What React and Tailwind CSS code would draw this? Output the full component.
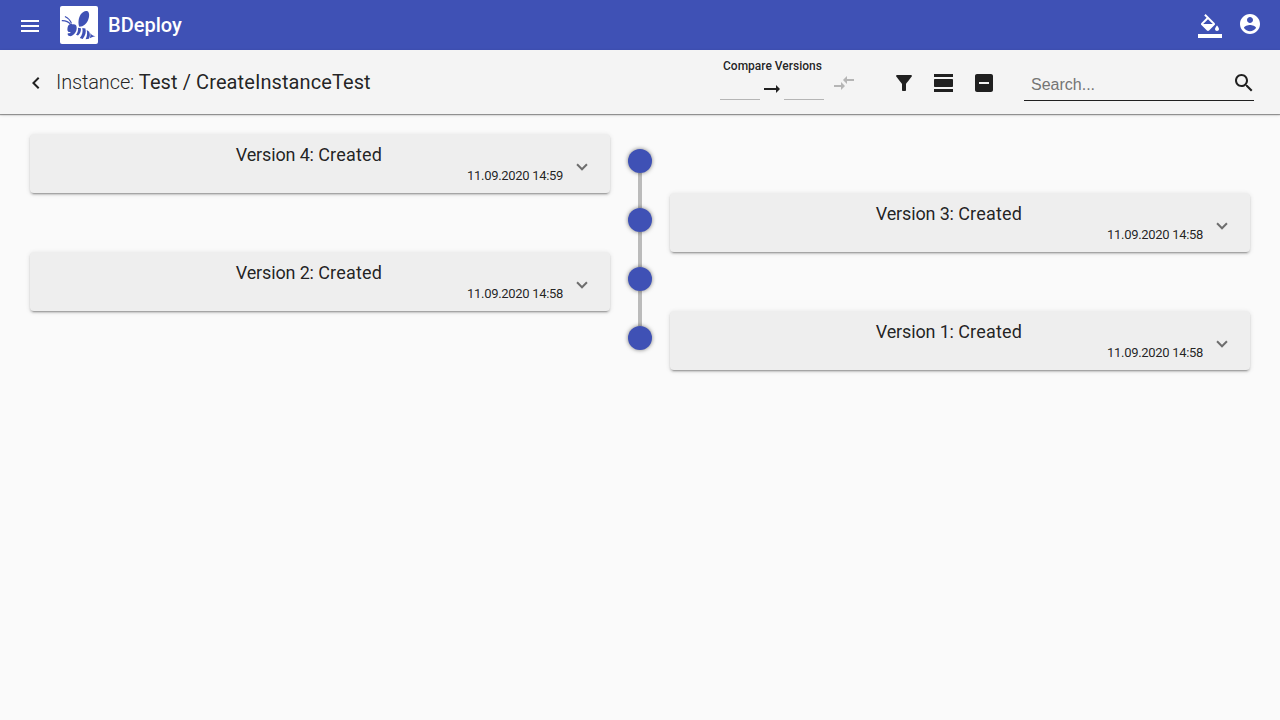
const ICONS = {
  menu: 'M3 18h18v-2H3v2zm0-5h18v-2H3v2zm0-7v2h18V6H3z',
  fill: 'M16.56 8.94L7.62 0 6.21 1.41l2.38 2.38-5.15 5.15c-.59.59-.59 1.54 0 2.12l5.5 5.5c.29.29.68.44 1.06.44s.77-.15 1.06-.44l5.5-5.5c.59-.58.59-1.53 0-2.12zM5.21 10L10 5.21 14.79 10H5.21zM19 11.5s-2 2.17-2 3.5c0 1.1.9 2 2 2s2-.9 2-2c0-1.33-2-3.5-2-3.5zM0 20h24v4H0z',
  account: 'M12 2C6.48 2 2 6.48 2 12s4.48 10 10 10 10-4.48 10-10S17.52 2 12 2zm0 3c1.66 0 3 1.34 3 3s-1.34 3-3 3-3-1.34-3-3 1.34-3 3-3zm0 14.2c-2.5 0-4.71-1.28-6-3.22.03-1.99 4-3.08 6-3.08 1.99 0 5.97 1.09 6 3.08-1.29 1.94-3.5 3.22-6 3.22z',
  back: 'M15.41 7.41L14 6l-6 6 6 6 1.41-1.41L10.83 12z',
  arrow: 'M16.01 11H4v2h12.01v3L20 12l-3.99-4v3z',
  compare: 'M9.01 14H2v2h7.01v3L13 15l-3.99-4v3zm5.98-1v-3H22V8h-7.01V5L11 9l3.99 4z',
  filter: 'M4.25 5.61C6.27 8.2 10 13 10 13v6c0 .55.45 1 1 1h2c.55 0 1-.45 1-1v-6s3.72-4.8 5.74-7.39A.998.998 0 0 0 18.95 4H5.04c-.83 0-1.3.95-.79 1.61z',
  day: 'M2 21h19v-3H2v3zM20 8H3c-.55 0-1 .45-1 1v6c0 .55.45 1 1 1h17c.55 0 1-.45 1-1V9c0-.55-.45-1-1-1zM2 3v3h19V3H2z',
  minus: 'M19 3H5c-1.1 0-2 .9-2 2v14c0 1.1.9 2 2 2h14c1.1 0 2-.9 2-2V5c0-1.1-.9-2-2-2zm-2 10H7v-2h10v2z',
  search: 'M15.5 14h-.79l-.28-.27C15.41 12.59 16 11.11 16 9.5 16 5.91 13.09 3 9.5 3S3 5.91 3 9.5 5.91 16 9.5 16c1.61 0 3.09-.59 4.23-1.57l.27.28v.79l5 4.99L20.49 19l-4.99-5zm-6 0C7.01 14 5 11.99 5 9.5S7.01 5 9.5 5 14 7.01 14 9.5 11.99 14 9.5 14z',
};

function Icon({ name, className = '' }) {
  return (
    <svg viewBox="0 0 24 24" fill="currentColor" className={`size-6 shrink-0 ${className}`}>
      <path d={ICONS[name]} />
    </svg>
  );
}

function BeeLogo() {
  return (
    <svg viewBox="0 0 38 38" className="ml-[18px] size-[38px] shrink-0 text-[#3f51b5]">
      <rect width="38" height="38" rx="2" fill="#fff" />
      <g fill="currentColor">
        <path d="M19.300 20.800C17.800 17.500 18.300 12 20.800 8.300 22.800 5.400 25.700 4.200 27.600 5.300c2 1.300 1.900 5.300.4 9-1.500 3.500-4.500 6.300-8.700 6.500z" />
        <path d="M8.300 19.600c.8-1.600 3-2.200 4.600-1.200 1.600-.5 3 .3 3.500 1.700.9 2.600-.1 6-2.200 8-1.300 1.500-3 2.300-4.600 2-1.600-.3-2.300-1.600-1.800-2.900 1.400.3 2.600-.2 2.900-1.300-2.200.5-3.600-.8-3.300-3 .1-1.200.4-2.300.9-3.300z" />
        <path d="M18 21.700l2.900.6c.3 2.900-.6 5.500-2.900 7.300l-2-.9c1.700-2 2.300-4.300 2-7z" />
        <path d="M22.300 21.900l3.100.7c1 3.700.1 7.100-2.700 10.300l-2.900-.9c2.500-3 3.300-6.400 2.500-10.100z" />
        <path d="M26.700 24l2.500 1.700c1 2.400.9 4.800-.3 7.100l-3.300.4c1.500-3 1.900-6.100 1.100-9.200z" />
        <path d="M30.200 27c.9 1.700 2.300 2.500 5.300 3.300-2 .2-3.600 1-5.700 2 .6-1.800.8-3.500.4-5.300z" />
      </g>
      <path d="M10.500 18.500C8.500 15.500 5.500 14.600 1.800 14.700M11.500 17.500c-1.200-3.200-3.300-5.600-6.600-7" fill="none" stroke="currentColor" strokeWidth="1.200" />
    </svg>
  );
}

const VERSIONS = [
  { id: 4, time: '11.09.2020 14:59' },
  { id: 3, time: '11.09.2020 14:58' },
  { id: 2, time: '11.09.2020 14:58' },
  { id: 1, time: '11.09.2020 14:58' },
];

function VersionCard({ version }) {
  return (
    <div className="flex h-[59px] w-[580px] items-center rounded bg-[#eeeeee] pl-6 shadow-[0_3px_1px_-2px_rgba(0,0,0,0.2),0_2px_2px_0_rgba(0,0,0,0.14),0_1px_5px_0_rgba(0,0,0,0.12)]">
      <div className="flex w-[509px] shrink-0 flex-col pt-[3px]">
        <div className="h-[22px] pl-[1px] text-center text-[18px] leading-[22px]">
          <span className="tracking-[-0.15px]">Version {version.id}: </span>
          <span className="tracking-[0.22px]">Created</span>
        </div>
        <div className="h-5 text-right text-[13px] leading-5 tracking-[-0.31px]">{version.time}</div>
      </div>
      <div className="mt-[2px] ml-[15px] size-2 shrink-0 rotate-45 border-r-2 border-b-2 border-black/54" />
    </div>
  );
}

function TimelineRow({ version, left, last }) {
  return (
    <div className="grid h-[59px] grid-cols-[580px_60px_580px]">
      <div>{left && <VersionCard version={version} />}</div>
      <div className="flex flex-col items-center pt-[15px]">
        <div className="z-10 size-6 shrink-0 rounded-full bg-[#3f51b5] shadow-[0_0_4px_rgba(0,0,0,0.5)]" />
        {!last && <div className="h-[35px] w-1 shrink-0 bg-[#bbbbbb]" />}
      </div>
      <div>{!left && <VersionCard version={version} />}</div>
    </div>
  );
}

export default function App() {
  return (
    <div className="h-screen overflow-hidden bg-[#fafafa] font-['Roboto',sans-serif] text-black/87">
      <header className="flex h-[50px] items-center bg-[#3f51b5] pr-[18px] pl-[18px] text-white">
        <Icon name="menu" className="mt-[2px]" />
        <BeeLogo />
        <h1 className="ml-[10px] flex-1 text-[20px] leading-8 font-medium">BDeploy</h1>
        <Icon name="fill" className="mt-[2px]" />
        <Icon name="account" className="mb-[2px] ml-4" />
      </header>

      <div className="flex h-16 items-center bg-[#f4f4f4] pl-6 pr-[26px] shadow-[0_1px_1px_rgba(0,0,0,0.36),0_1px_3px_rgba(0,0,0,0.16)]">
        <Icon name="back" className="mt-[2px]" />
        <div className="ml-2 w-[664px] text-[20px] leading-8 whitespace-nowrap">
          <span className="font-light tracking-[-0.15px]">Instance: </span>
          <span className="tracking-[0.09px]">Test / CreateInstanceTest</span>
        </div>
        <div className="flex w-[104px] shrink-0 flex-col pb-[6px]">
          <div className="h-[14px] pl-[3px] text-[12px] leading-[14px] font-medium whitespace-nowrap">Compare Versions</div>
          <div className="flex h-[27px] items-end">
            <div className="w-10 border-b border-black/26" />
            <Icon name="arrow" className="-mb-[1px]" />
            <div className="w-10 border-b border-black/26" />
          </div>
        </div>
        <Icon name="compare" className="mt-[2px] ml-2 text-black/26" />
        <div className="mt-[2px] ml-9 flex gap-4">
          <Icon name="filter" />
          <Icon name="day" />
          <Icon name="minus" />
        </div>
        <div className="mt-[3px] ml-auto flex h-[34px] w-[230px] items-start border-b border-black/87 pl-[7px]">
          <div className="mt-[6px] w-[201px] shrink-0 font-['Liberation_Sans',sans-serif] text-[16px] leading-[24px] text-[#757575]">Search...</div>
          <Icon name="search" className="mt-[4px]" />
        </div>
      </div>

      <main className="px-[30px] pt-5">
        {VERSIONS.map((version, i) => (
          <TimelineRow key={version.id} version={version} left={i % 2 === 0} last={i === VERSIONS.length - 1} />
        ))}
      </main>
    </div>
  );
}
